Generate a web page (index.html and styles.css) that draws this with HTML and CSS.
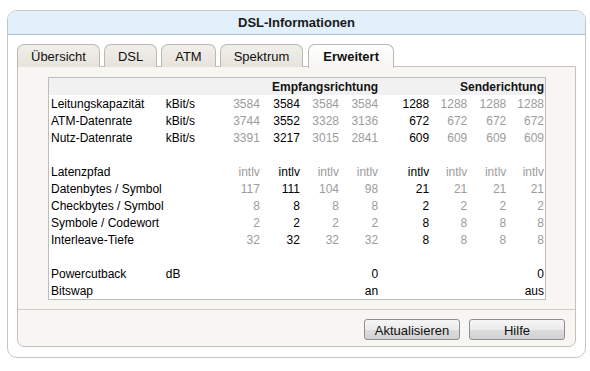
FILE: index.html
```html
<!DOCTYPE html>
<html lang="de">
<head>
<meta charset="utf-8">
<title>DSL-Informationen</title>
<link rel="stylesheet" href="styles.css">
</head>
<body>
<div class="dialog">
  <div class="titlebar">DSL-Informationen</div>
  <div class="dialog-body">
    <div class="tabs">
      <div class="tab">Übersicht</div>
      <div class="tab">DSL</div>
      <div class="tab">ATM</div>
      <div class="tab">Spektrum</div>
      <div class="tab active">Erweitert</div>
    </div>
    <div class="panel">
      <div class="content">
        <table class="data">
          <colgroup>
            <col class="c-label"><col class="c-unit">
            <col class="c-n1"><col class="c-n2"><col class="c-n3"><col class="c-n4">
            <col class="c-n5"><col class="c-n6"><col class="c-n7"><col class="c-n8">
          </colgroup>
          <tr class="head">
            <td></td><td></td>
            <td colspan="4" class="num">Empfangsrichtung</td>
            <td colspan="4" class="num">Senderichtung</td>
          </tr>
          <tr><td>Leitungskapazität</td><td>kBit/s</td><td class="num g">3584</td><td class="num">3584</td><td class="num g">3584</td><td class="num g">3584</td><td class="num">1288</td><td class="num g">1288</td><td class="num g">1288</td><td class="num g">1288</td></tr>
          <tr><td>ATM-Datenrate</td><td>kBit/s</td><td class="num g">3744</td><td class="num">3552</td><td class="num g">3328</td><td class="num g">3136</td><td class="num">672</td><td class="num g">672</td><td class="num g">672</td><td class="num g">672</td></tr>
          <tr><td>Nutz-Datenrate</td><td>kBit/s</td><td class="num g">3391</td><td class="num">3217</td><td class="num g">3015</td><td class="num g">2841</td><td class="num">609</td><td class="num g">609</td><td class="num g">609</td><td class="num g">609</td></tr>
          <tr class="blank"><td colspan="10"></td></tr>
          <tr><td>Latenzpfad</td><td></td><td class="num g">intlv</td><td class="num">intlv</td><td class="num g">intlv</td><td class="num g">intlv</td><td class="num">intlv</td><td class="num g">intlv</td><td class="num g">intlv</td><td class="num g">intlv</td></tr>
          <tr><td>Datenbytes / Symbol</td><td></td><td class="num g">117</td><td class="num">111</td><td class="num g">104</td><td class="num g">98</td><td class="num">21</td><td class="num g">21</td><td class="num g">21</td><td class="num g">21</td></tr>
          <tr><td>Checkbytes / Symbol</td><td></td><td class="num g">8</td><td class="num">8</td><td class="num g">8</td><td class="num g">8</td><td class="num">2</td><td class="num g">2</td><td class="num g">2</td><td class="num g">2</td></tr>
          <tr><td>Symbole / Codewort</td><td></td><td class="num g">2</td><td class="num">2</td><td class="num g">2</td><td class="num g">2</td><td class="num">8</td><td class="num g">8</td><td class="num g">8</td><td class="num g">8</td></tr>
          <tr><td>Interleave-Tiefe</td><td></td><td class="num g">32</td><td class="num">32</td><td class="num g">32</td><td class="num g">32</td><td class="num">8</td><td class="num g">8</td><td class="num g">8</td><td class="num g">8</td></tr>
          <tr class="blank"><td colspan="10"></td></tr>
          <tr><td>Powercutback</td><td>dB</td><td></td><td></td><td></td><td class="num">0</td><td></td><td></td><td></td><td class="num">0</td></tr>
          <tr><td>Bitswap</td><td></td><td></td><td></td><td></td><td class="num">an</td><td></td><td></td><td></td><td class="num">aus</td></tr>
        </table>
      </div>
      <div class="actions">
        <button class="btn">Aktualisieren</button>
        <button class="btn">Hilfe</button>
      </div>
    </div>
  </div>
</div>
</body>
</html>
```

FILE: styles.css
```css
html, body {
  margin: 0;
  padding: 0;
  background: #ffffff;
}
body {
  font-family: "Liberation Sans", Arial, sans-serif;
  color: #000;
  padding: 10px 0 0 7px;
}
.dialog {
  width: 577px;
  height: 346px;
  border: 1px solid #c6c6c6;
  border-radius: 10px;
  background: #fff;
  overflow: hidden;
  display: flex;
  flex-direction: column;
}
.titlebar {
  height: 23px;
  line-height: 24px;
  background: #e1f0fb;
  border-bottom: 1px solid #a9bfcf;
  text-align: center;
  font-weight: bold;
  font-size: 13px;
  color: #1a1a1a;
}
.dialog-body {
  padding: 9px 9px 0 9px;
}
.tabs {
  display: flex;
  gap: 4px;
  height: 23px;
  position: relative;
  z-index: 1;
}
.tab {
  height: 22px;
  line-height: 24px;
  padding: 0 13px;
  font-size: 13px;
  color: #111;
  border: 1px solid #bcb8b0;
  border-bottom: none;
  border-radius: 7px 7px 0 0;
  background: linear-gradient(#f1efeb, #e6e3dc);
}
.tab.active {
  font-weight: bold;
  height: 23px;
  padding: 0 14px;
  margin-left: 1px;
  background: linear-gradient(#ffffff, #f7f6f3);
}
.panel {
  height: 279px;
  border: 1px solid #c4c1ba;
  border-radius: 0 0 7px 7px;
  background: #f7f6f3;
  margin-top: -1px;
  display: flex;
  flex-direction: column;
}
.content {
  padding: 10px 29px 9px 30px;
  border-bottom: 1px solid #cfccc6;
}
.data {
  table-layout: fixed;
  width: 498px;
  border-collapse: collapse;
  border: 1px solid #bdbdbd;
  background: #fff;
  font-size: 12px;
}
.c-label { width: 117px; }
.c-unit { width: 56px; }
.c-n1 { width: 38px; }
.c-n2 { width: 40px; }
.c-n3 { width: 39px; }
.c-n4 { width: 39px; }
.c-n5 { width: 51px; }
.c-n6 { width: 38px; }
.c-n7 { width: 39px; }
.c-n8 { width: 39px; }
.data td {
  height: 16px;
  padding: 1px 0 0 0;
  white-space: nowrap;
  line-height: 16px;
}
.data td:first-child {
  padding-left: 2px;
}
.data td:last-child {
  padding-right: 1px;
}
.data tr.head td {
  background: #f1f1f1;
  font-weight: bold;
  color: #111;
}
.num {
  text-align: right;
}
.g {
  color: #9c9c9c;
}
.actions {
  display: flex;
  justify-content: flex-end;
  gap: 9px;
  padding: 9px 10px 0 0;
}
.btn {
  width: 96px;
  height: 21px;
  padding: 1px 0 0 0;
  font-family: "Liberation Sans", Arial, sans-serif;
  font-size: 13px;
  color: #111;
  border: 1px solid #8e8e8e;
  border-radius: 3px;
  background: linear-gradient(#f6f6f6 0%, #ebebeb 50%, #dcdcdc 51%, #d2d2d2 100%);
}
```
